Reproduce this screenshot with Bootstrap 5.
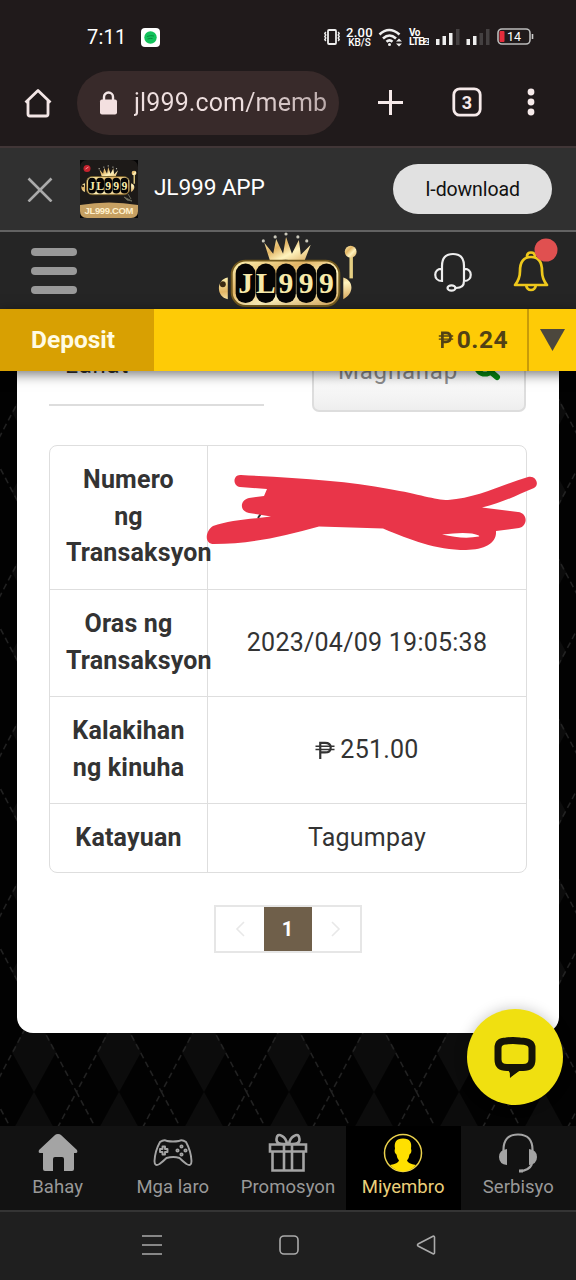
<!DOCTYPE html>
<html lang="fil">
<head>
<meta charset="utf-8">
<meta name="viewport" content="width=device-width, initial-scale=1">
<title>JL999</title>
<link href="https://cdn.jsdelivr.net/npm/bootstrap@5.3.0/dist/css/bootstrap.min.css" rel="stylesheet">
<style>
html,body{height:1280px;overflow:hidden}
body{width:576px;font-family:Roboto,"Noto Sans",sans-serif;background:#1e1e1e;color:#333;line-height:1.2}
svg{display:block;flex:none}
.statusbar{height:74px;background:#201a1b;color:#fff;padding:0 42px 0 87px}
.clock{font-size:20px;letter-spacing:.2px}
.speed{font-size:13px;line-height:11px;font-weight:500;text-align:center;letter-spacing:.3px;margin-left:5px}
.speed small{font-size:10px;display:block;line-height:9px;letter-spacing:0}
.volte{font-size:10px;line-height:9px;font-weight:700;letter-spacing:-.6px;margin-left:6px;width:20px;white-space:nowrap}
.volte b{background:#eee;color:#222;font-size:7.5px;line-height:7px;display:inline-block;padding:0 1px;vertical-align:1px}
.browserbar{height:72px;background:#201a1b;color:#f0e0e0;padding:0 41px 14px 23px}
.omnibox{width:262px;height:64px;background:#382a2a;padding-left:22px;margin-left:24px;overflow:hidden}
.address{font-size:25px;width:194px;overflow:hidden;white-space:nowrap;letter-spacing:.12px;background:linear-gradient(90deg,#eedfdf 55%,#b9a9a9);-webkit-background-clip:text;background-clip:text;color:transparent}
.appbanner{height:86px;background:#303030;border-top:2px solid #413637;border-bottom:2px solid #626262;padding:0 24px 0 27px;color:#fff}
.apptitle{font-size:22.7px;margin:-3px 0 0 16px;letter-spacing:-.15px}
.getapp{width:159px;height:50px;background:#e1e1e1;color:#111;font-size:19.5px;padding:2px 0 0;letter-spacing:-.1px}
.sitehead{height:77px;background:#252525;padding:0 24px 0 31px}
.burger{width:46px;flex:none;gap:11px;margin-top:1px}
.burger i{height:8px;border-radius:4px;background:#999}
.moneybar{height:62px;background:#fecb06;z-index:3;box-shadow:0 3px 12px rgba(0,0,0,.55);font-weight:700;font-size:24.5px}
.dep{width:154px;background:#d8a002;color:#fffbe4;padding-left:31px}
.amount{color:#514115;letter-spacing:.5px;padding-right:19px}
.toggler{width:49px;border-left:2px solid #c89b08}
.stage{height:755px;padding:0 17px;overflow:hidden;background-color:#020202;background-position:34px 81px;background-size:85px 160px;
background-image:url("data:image/svg+xml,%3Csvg xmlns='http://www.w3.org/2000/svg' width='85' height='160' viewBox='0 0 85 160'%3E%3Cpath fill='%230c0c0c' d='M0 0l22 40-22 40-22-40zM85 0l22 40-22 40-22-40zM0 80l22 40-22 40-22-40zM85 80l22 40-22 40-22-40z'/%3E%3Cpath fill='none' stroke='%23222222' stroke-width='1.5' stroke-dasharray='6 4' d='M0 80L42.5 0L85 80L42.5 160z'/%3E%3C/svg%3E")}
.sheet{height:662px;background:#fff;border-radius:0 0 16px 16px;padding:0 33px 0 32px}
.filters{height:41px}
.typebox{width:215px;height:35px;border-bottom:2px solid #ddd;padding-left:16px;font-size:24px}
.typebox span{display:block;margin-top:-20px;letter-spacing:.8px}
.searchbtn{width:214px;height:41px;border:2px solid #ddd;border-top:0;border-radius:0 0 7px 7px;background:linear-gradient(#fff,#eee);color:#8d8d8d;font-size:24px;padding-left:24px}
.searchbtn span{margin-top:-14px;letter-spacing:.8px}
.records{margin-top:33px;width:478px;border:1.500px solid #dedede;border-radius:8px;font-size:25px;line-height:36.5px;height:428px;display:grid;grid-template-rows:143px 107px 107px 69px}
.rec+.rec{border-top:1.500px solid #dedede}
.rec>div{padding:16px}
.rec .k{width:158px;font-weight:700;text-align:center;border-right:1.500px solid #dedede;flex:none;font-size:25px;letter-spacing:.18px}
.rec .v{flex:1;letter-spacing:.25px}
.scrawl{left:156px;top:27px}
.pager{width:148px;height:48px;margin:32px auto 0;border:2px solid #e6e6e6}
.pager>div{flex:1}
.cur{background:#6f5f4a;color:#fff;font-weight:700;font-size:20px}
.chat{left:467px;top:1009px;width:96px;height:96px;background:#f0e010;box-shadow:0 0 14px rgba(0,0,0,.22);z-index:5}
.tabs{height:84px;background:#121212;color:#999;font-size:18.5px;z-index:2;letter-spacing:.05px}
.tabs>div{width:115.2px;padding-top:7px}
.tabs .on{background:#000;color:#ecd07a}
.tabs svg{margin-bottom:3px}
.sysbar{height:70px;background:#1f1f1f;border-top:2px solid #343434;gap:117px;padding:0 0 2px 2px}
</style>
</head>
<body class="position-relative d-flex flex-column">
<svg width="0" height="0" class="position-absolute">
<defs>
<linearGradient id="gold" x1="0" x2="1" y1="0" y2="1"><stop offset="0" stop-color="#fff5b5"/><stop offset=".35" stop-color="#e2b565"/><stop offset=".6" stop-color="#fff3bd"/><stop offset="1" stop-color="#d8a85c"/></linearGradient>
<symbol id="slot" viewBox="0 0 142 78">
<path fill="url(#gold)" d="M10 46C-2 48-2 66 10 68zM127 46c11 3 11 17 0 22z"/><circle cx="5" cy="53" r="3" fill="#3b2b12"/>
<path stroke="#e5cf83" stroke-width="3.500" d="M135 20v27"/><circle cx="134.500" cy="20" r="6" fill="url(#gold)"/>
<path fill="url(#gold)" d="M53 30L47 11l9 11 3-15 7 15 3-17 6 17 7-14 2 15 10-10-7 18q-16-5-34-1z"/>
<g fill="#c9c8bb"><circle cx="46" cy="9" r="1.600"/><circle cx="58" cy="5" r="1.600"/><circle cx="69" cy="2" r="1.600"/><circle cx="81" cy="5" r="1.600"/><circle cx="90" cy="9" r="1.600"/></g>
<rect x="14" y="29" width="109" height="46" rx="14" fill="url(#gold)" stroke="#72591e" stroke-width="2"/>
<g fill="#050505"><rect x="18" y="32" width="20" height="40" rx="10"/><rect x="38.500" y="32" width="20" height="40" rx="10"/><rect x="59" y="32" width="20" height="40" rx="10"/><rect x="79.500" y="32" width="20" height="40" rx="10"/><rect x="100" y="32" width="20" height="40" rx="10"/></g>
<g fill="#f6e9a9" font-family="Liberation Serif,serif" font-weight="700" font-size="30" text-anchor="middle"><text x="28" y="62">J</text><text x="48.500" y="62">L</text><text x="69" y="62">9</text><text x="89.500" y="62">9</text><text x="110" y="62">9</text></g>
</symbol>
</defs>
</svg>

<div class="statusbar d-flex align-items-center">
<span class="clock">7:11</span>
<svg style="margin-left:15px" width="19" height="19" viewBox="0 0 19 19"><rect width="19" height="19" rx="4" fill="#fff"/><circle cx="9.500" cy="9.500" r="6.200" fill="#12c25b"/><path d="M6 8.500q4-1.500 7-.5M6.500 11q3-1 5-.5" stroke="#0a8d40" fill="none"/></svg>
<svg class="ms-auto" width="18" height="18" viewBox="0 0 18 18" fill="none" stroke="#eee" stroke-width="1.800"><rect x="5" y="2" width="8" height="14" rx="1"/><path d="M2.800 4l-1 1.500 1 1.500-1 1.500 1 1.500-1 1.500 1 1.500M15.200 4l1 1.500-1 1.500 1 1.500-1 1.500 1 1.500-1 1.500" stroke-width="1.400"/></svg>
<div class="speed">2.00<small>KB/S</small></div>
<svg style="margin-left:5px" width="25" height="20" viewBox="0 0 25 20" fill="none" stroke="#eee" stroke-width="2.600"><path d="M1.500 7.500q9.500-9 20 0M5 11.500q6.500-6 13 0M8.500 14.800q3-2.700 6 0"/><circle cx="11.500" cy="17.500" r="1.500" fill="#eee" stroke="none"/><path d="M18 14.500l3-3 3 3zM18 16.500l3 3 3-3z" fill="#eee" stroke="none"/></svg>
<div class="volte">Vo<br>LTE<b>2</b></div>
<svg style="margin-left:7px" width="55" height="18" viewBox="0 0 55 18" fill="#eee"><path d="M0 11h3.500v6H0zM6.500 8H10v9H6.500zM13 5h3.500v12H13zM30.500 11H34v6h-3.500zM37 8h3.500v9H37z"/><path fill="#444041" d="M20 1h3.500v16H20zM43.500 5H47v12h-3.500zM50 1h3.500v16H50z"/></svg>
<svg style="margin-left:6px" width="37" height="18" viewBox="0 0 37 18"><rect x="1" y="1" width="32" height="15" rx="4" fill="none" stroke="#bbb" stroke-width="1.600"/><rect x="2.500" y="3" width="5" height="11" rx="1" fill="#e52d3c"/><path d="M35.500 6v5" stroke="#ccc" stroke-width="1.600"/><text x="17" y="13" font-size="12.500" fill="#fff" text-anchor="middle" font-family="Roboto">14</text></svg>
</div>

<div class="browserbar d-flex align-items-center">
<svg width="30" height="30" viewBox="0 0 30 30" fill="none" stroke="#f3e6e6" stroke-width="2.800" stroke-linejoin="round"><path d="M2.500 14.500L15 2.500l12.500 12M5 12.500V26q0 2 2 2h16q2 0 2-2V12.500"/></svg>
<div class="omnibox rounded-pill d-flex align-items-center">
<svg width="19" height="24" viewBox="0 0 19 24"><path d="M5 9V6a4.500 4.500 0 0 1 9 0v3" fill="none" stroke="#f3e6e6" stroke-width="2.400"/><rect x="1" y="8.500" width="17" height="15" rx="2" fill="#f3e0e0"/></svg>
<div class="address" style="margin-left:16px">jl999.com/memb</div>
</div>
<svg style="margin-left:38px" width="27" height="27" viewBox="0 0 27 27" stroke="#f6eaea" stroke-width="3"><path d="M13.500 0v25M1 12.500h25"/></svg>
<svg style="margin:-2px 0 0 48px" width="30" height="30" viewBox="0 0 30 30"><rect x="1.800" y="1.800" width="26.400" height="26.400" rx="6" fill="none" stroke="#f6eaea" stroke-width="2.800"/><text x="15" y="21.500" text-anchor="middle" font-family="Roboto" font-size="18" font-weight="700" fill="#f6eaea">3</text></svg>
<svg class="ms-auto" style="margin-top:-2px" width="8" height="28" viewBox="0 0 8 28" fill="#f6eaea"><circle cx="4" cy="4" r="3.400"/><circle cx="4" cy="14" r="3.400"/><circle cx="4" cy="24" r="3.400"/></svg>
</div>

<div class="appbanner d-flex align-items-center">
<svg width="26" height="26" viewBox="0 0 26 26" stroke="#aaa" stroke-width="2.600"><path d="M1.500 2.500l23 23M24.500 2.500l-23 23"/></svg>
<svg style="margin-left:27px" width="58" height="58" viewBox="0 0 58 58"><rect width="58" height="58" fill="#050505"/><rect width="58" height="58" rx="7" fill="#1d1a18"/><circle cx="7" cy="8.500" r="3.500" fill="#c4222d"/><path d="M5.500 9l3-2" stroke="#f59299"/><use href="#slot" x="1" y="5" width="56" height="31"/><path d="M44 37l8 4-5-1zM48 34l3 5" stroke="#665" fill="#887"/><path d="M0 45q29-5 58 0v6q0 7-7 7H7q-7 0-7-7z" fill="#c6a062"/><text x="29" y="54.300" font-size="9.500" font-weight="700" textLength="49" text-anchor="middle" font-family="Liberation Sans" fill="#fff0cc">JL999.COM</text></svg>
<div class="apptitle">JL999 APP</div>
<button class="btn getapp rounded-pill border-0 ms-auto">I-download</button>
</div>

<div class="sitehead d-flex align-items-center">
<div class="burger d-flex flex-column"><i></i><i></i><i></i></div>
<svg style="margin-left:140px" width="142" height="77"><use href="#slot" width="142" height="77"/></svg>
<svg style="margin:3px 0 0 74px" width="40" height="40" viewBox="0 0 40 40" fill="none" stroke="#eee" stroke-width="2.200" stroke-linecap="round"><path d="M9 29V14Q9 2 20 2t11 12v15M9 17c-9-1-9 12 0 12zM31 17c9-1 9 12 0 12zM31 29q0 7-8 7"/><ellipse cx="18.500" cy="36" rx="4" ry="2.600"/></svg>
<svg style="margin:-10px 0 0 38px" width="48" height="60" viewBox="0 0 48 60" fill="none" stroke="#eec81c" stroke-width="2.700" stroke-linejoin="round"><path d="M4 49q5-6 5-14 0-14 11-14t11 14q0 8 5 14zM16 20.500q0-4 4-4t4 4M15 49q1 5 5 5t5-5"/><circle cx="35" cy="14" r="11.500" fill="#e05050" stroke="none"/></svg>
</div>

<div class="moneybar d-flex position-relative">
<div class="dep d-flex align-items-center">Deposit</div>
<div class="amount ms-auto d-flex align-items-center"><svg style="margin-right:3px" width="16" height="18" viewBox="0 0 16 20" fill="none" stroke="#514115" stroke-width="3"><path d="M4 19V2h4q5 0 5 5t-5 5H4"/><path d="M0 5.500h16M0 9h16" stroke-width="1.600"/></svg>0.24</div>
<div class="toggler d-flex align-items-center justify-content-center"><svg width="26" height="24" viewBox="0 0 26 24"><path fill="#4c473d" d="M0 1h25L12.500 23z"/></svg></div>
</div>

<div class="stage">
<div class="sheet">
<div class="filters d-flex justify-content-between">
<div class="typebox"><span>Lahat</span></div>
<div class="searchbtn d-flex"><span>Maghanap</span><svg style="margin:-18px 0 0 15px" width="30" height="28" viewBox="0 0 30 28" fill="none" stroke="#078b12" stroke-width="5"><circle cx="12" cy="12" r="9"/><path d="M18 19l6 5" stroke-width="6" stroke-linecap="round"/></svg></div>
</div>
<div class="records position-relative">
<div class="rec d-flex"><div class="k">Numero ng Transaksyon</div><div class="v"></div></div>
<div class="rec d-flex"><div class="k">Oras ng Transaksyon</div><div class="v d-flex align-items-center justify-content-center">2023/04/09 19:05:38</div></div>
<div class="rec d-flex"><div class="k">Kalakihan ng kinuha</div><div class="v d-flex align-items-center justify-content-center"><svg style="margin-right:5px" width="20" height="19" viewBox="0 0 20 20" fill="none" stroke="#333" stroke-width="2.300"><path d="M5 19V2h5q6 0 6 5t-6 5H5"/><path d="M0 5.500h20M0 9h20" stroke-width="1.500"/></svg>251.00</div></div>
<div class="rec d-flex"><div class="k">Katayuan</div><div class="v d-flex align-items-center justify-content-center">Tagumpay</div></div>
<svg class="scrawl position-absolute" width="334" height="78" viewBox="207 474 334 78"><path d="M259 519l4-6" stroke="#333" stroke-width="2"/><path fill="#e93549" d="M242 476C300 479 350 482 390 490C420 495 436 501 449 501C478 499 502 486 529 478C537 476 541 486 535 489C518 496 503 504 483 508.500L519 513C529 514 529 527 520 529L497 532C498 544 486 551 467 551C436 551 412 541 384 529.500L320 527.500C283 538 250 545 215 545C205 545 206 532 214 527C230 521 252 520 272 517.500L250 514C240 512 241 501 250 499L265 497L268 490L241 488C233 487 234 475 242 476z"/><path fill="#fff" d="M443 535.500q19-2.500 30-1 9 2 7 3-16 3-37-2z"/></svg>
</div>
<div class="pager d-flex">
<div class="d-flex align-items-center justify-content-center"><svg width="10" height="16" viewBox="0 0 10 16" fill="none" stroke="#e8e8e8" stroke-width="1.600"><path d="M9 1L2 8l7 7"/></svg></div>
<div class="cur d-flex align-items-center justify-content-center">1</div>
<div class="d-flex align-items-center justify-content-center"><svg width="10" height="16" viewBox="0 0 10 16" fill="none" stroke="#e8e8e8" stroke-width="1.600"><path d="M1 1l7 7-7 7"/></svg></div>
</div>
</div>
</div>

<div class="tabs d-flex position-relative">
<div class="d-flex flex-column align-items-center"><svg width="40" height="40" viewBox="0 0 40 40"><path fill="#a4a4a4" d="M20 1q2 0 3 1l16 15q1 3-1 3h-2v16q0 2-2 2h-8V26q0-2-2-2h-7q-2 0-2 2v12H7q-2 0-2-2V20H2q-2 0-1-3L17 2q1-1 3-1z"/></svg>Bahay</div>
<div class="d-flex flex-column align-items-center"><svg width="40" height="40" viewBox="0 0 40 40" fill="none" stroke="#a4a4a4" stroke-width="1.900"><path d="M7 9q4-3 7-1 6 1 12 0 3-2 7 1 5 9 5.500 19 0 6-5 3-4-3-7-6-6-2-13 0-3 3-7 6-5 3-5-3Q2 18 7 9z"/><path d="M9.500 13.500h2.500v2.500h2.500v3H12v2.500H9.500V19H7v-3h2.500z" stroke-linejoin="round"/><g stroke-width="1.700"><circle cx="28.500" cy="13.500" r="1.200"/><circle cx="28.500" cy="21.500" r="1.200"/><circle cx="24.500" cy="17.500" r="1.200"/><circle cx="32.500" cy="17.500" r="1.200"/></g></svg>Mga laro</div>
<div class="d-flex flex-column align-items-center"><svg width="40" height="40" viewBox="0 0 40 40" fill="none" stroke="#a4a4a4" stroke-width="2.600"><path d="M2 11.500h36v7H2zM4.500 18.500h31v19h-31zM16 11.500v26M24 11.500v26M18 11Q8 12 8.500 6T14 3q4 2 5 8M22 11q10 1 9.500-5T26 3q-4 2-5 8"/></svg>Promosyon</div>
<div class="on d-flex flex-column align-items-center"><svg width="40" height="40" viewBox="0 0 40 40"><circle cx="20" cy="20" r="18.500" fill="none" stroke="#ead14c" stroke-width="1.500"/><path fill="#ffe000" d="M20 5.500c7 0 9 4 8 10 1 3 0 5-1.500 6q-.5 4-2.500 6 1 3 9 4.500Q27 38.500 20 38.500T7 32q8-1.500 9-4.500-2-2-2.500-6c-1.500-1-2.500-3-1.500-6-1-6 1-10 8-10z"/></svg>Miyembro</div>
<div class="d-flex flex-column align-items-center"><svg width="40" height="40" viewBox="0 0 40 40" fill="none" stroke="#a4a4a4" stroke-width="2.200"><path d="M5.500 18Q5 1.500 20 1.500T34.500 18M34 31q-3 7-13 7"/><path fill="#a4a4a4" stroke="none" d="M9 16v16Q1 31 1 24t8-8zM31 16v16q8-1 8-8t-8-8z"/><path d="M21 38h4" stroke-width="3"/></svg>Serbisyo</div>
</div>

<div class="sysbar d-flex align-items-center justify-content-center">
<svg width="20" height="20" viewBox="0 0 20 20" stroke="#aaa" stroke-width="1.700"><path d="M0 1h20M0 10h20M0 19h20"/></svg>
<svg width="20" height="20" viewBox="0 0 20 20" fill="none" stroke="#aaa" stroke-width="1.600"><rect x="1" y="1" width="18" height="18" rx="4"/></svg>
<svg width="20" height="20" viewBox="0 0 20 20" fill="none" stroke="#aaa" stroke-width="1.600" stroke-linejoin="round"><path d="M2 9L17 1.300q1.500-.5 1.500 1v15.400q0 1.500-1.500 1L2 11q-1-1 0-2z"/></svg>
</div>

<div class="chat position-absolute rounded-circle d-flex align-items-center justify-content-center">
<svg width="48" height="48" viewBox="0 0 48 48"><path fill="none" stroke="#151308" stroke-width="7" d="M21 34.500h-3q-9 0-9-8V15q0-7 8-7 7-1 14 0 12 0 12 7v11.500q0 8-9 8h-5L21 40" transform="translate(-2)"/><path fill="#151308" d="M18.500 31h11v5L19 45z"/></svg>
</div>
<script src="https://cdn.jsdelivr.net/npm/bootstrap@5.3.0/dist/js/bootstrap.bundle.min.js"></script>
</body>
</html>
